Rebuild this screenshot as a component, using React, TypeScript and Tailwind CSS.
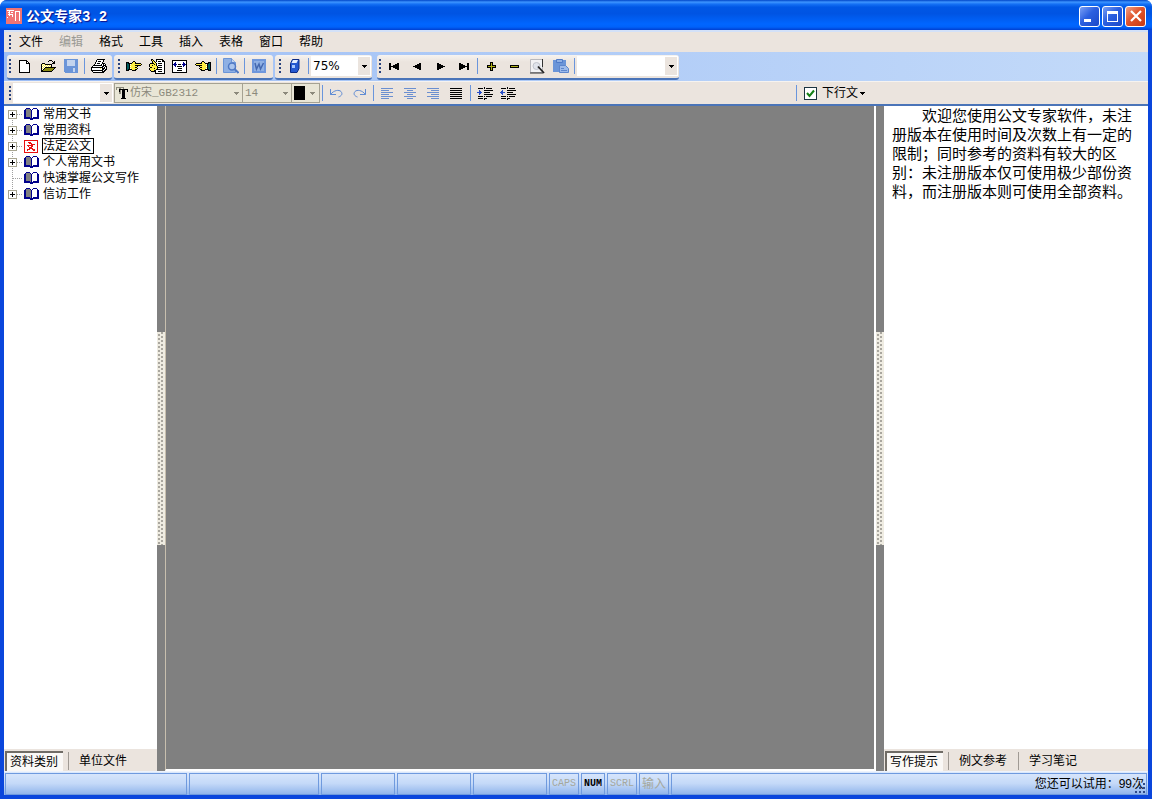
import React from 'react';

const ui = "font-['Liberation_Sans','Noto_Sans_CJK_SC',sans-serif]";

type IconProps = { children: React.ReactNode; size?: number };

function Icon({ children, size = 16 }: IconProps) {
  return (
    <svg width={size} height={size} viewBox={`0 0 ${size} ${size}`} shapeRendering="crispEdges" aria-hidden="true">
      {children}
    </svg>
  );
}

const palette: Record<string, string> = {
  k: '#000000',
  y: '#ffee44',
  w: '#ffffff',
  t: '#005a5a',
  o: '#8a8a12',
  g: '#808080',
  b: '#00008c',
  r: '#e81010',
  l: '#6b95d8',
  m: '#c3d4ee',
  s: '#2a50c8',
};

function Pixels({ rows }: { rows: string[] }) {
  const w = Math.max(...rows.map((r) => r.length));
  return (
    <svg width={w} height={rows.length} viewBox={`0 0 ${w} ${rows.length}`} shapeRendering="crispEdges" aria-hidden="true">
      {rows.flatMap((row, y) =>
        [...row].map((c, x) => (palette[c] ? <rect key={`${x}-${y}`} x={x} y={y} width="1" height="1" fill={palette[c]} /> : null)),
      )}
    </svg>
  );
}

const newPage = [
  'kkkkkkkk   ',
  'kwwwwwwkk  ',
  'kwwwwwwkwk ',
  'kwwwwwwkkkk',
  'kwwwwwwwwwk',
  'kwwwwwwwwwk',
  'kwwwwwwwwwk',
  'kwwwwwwwwwk',
  'kwwwwwwwwwk',
  'kwwwwwwwwwk',
  'kwwwwwwwwwk',
  'kwwwwwwwwwk',
  'kkkkkkkkkkk',
];

const openFolder = [
  '         kkk    ',
  '        k   k k ',
  '             kk ',
  '  kkk       kkk ',
  ' kywykkkkkkk    ',
  ' kwywywywywk    ',
  ' kywywywywyk    ',
  ' kwywkkkkkkkkkkk',
  ' kywkoooooooook ',
  ' kwkoooooooook  ',
  ' kkoooooooook   ',
  ' kkkkkkkkkkk    ',
];

const disk = [
  'llllllllllllll',
  'lllmmmmmmmmlll',
  'lllmmmmmmmmlll',
  'lllmmmmmmmmlll',
  'lllmmmmmmmmlll',
  'lllmmmmmmmmlll',
  'lllmmmmmmmmlll',
  'llllllllllllll',
  'llllllllllllll',
  'lllllllllmmlll',
  'lllllllllmmlll',
  'lllllllllmmlll',
  'lllllllllmmlll',
  ' lllllllllllll',
];

const printer = [
  '      kkkkkkkk  ',
  '     kwwwwwwk   ',
  '     kwkkkwwk   ',
  '    kwwwwwwk    ',
  '    kwkkkwwkkk  ',
  '   kwwwwwwkwkwk ',
  '  kkkkkkkkkwkkk ',
  ' kwwwwwwwwwkkwkk',
  'kkkkkkkkkkkkwkwk',
  'kwwwwwwwwywkkkwk',
  'kwwwwwwwwwwkkwkk',
  'kkkkkkkkkkkkwkk ',
  ' kwwwwwwwwwkkk  ',
  '  kkkkkkkkkkk   ',
];

const handRight = [
  '       kk       ',
  'kkk   kyyk      ',
  'ktkkkkyyykkkkkk ',
  'kttkwyyyyyyyyyyk',
  'kttkyyyyykkkkkk ',
  'kttkwyyyyyyk    ',
  'kttkyyyyykk     ',
  'kttkwyyyyyyk    ',
  'ktkkkkyyykk     ',
  'kkk   kkkk      ',
];
const handLeft = handRight.map((r) => [...r.padEnd(16)].reverse().join(''));

const handWrite = [
  '  kk   kkkkkkk  ',
  '  kyk  kwwwwwkk ',
  '   kyk kwkkkwkkk',
  '   kyykwwwwwwwwk',
  ' kkkkyykwkkkkwwk',
  'kyyyykykwwwwwwwk',
  'kyykyyykwkkkkwwk',
  'kyyyyyyykwwwwwwk',
  ' kkyyyyykkkkkwwk',
  'kyyyykyykwwwwwwk',
  'kyyyyyykkkkkkwwk',
  ' kyyykkwwwwwwwwk',
  '  kkkkkwwkkkkwwk',
  '      kwwwwwwwwk',
  '      kkkkkkkkkk',
];

const pageWidth = [
  'kkkkkkkkkkkkkkk',
  'kwwwwwwwwwwwwwk',
  'kwwbwwwwwwwbwwk',
  'kwbbwwwwwwwbbwk',
  'kbbbbwkkkwbbbbk',
  'kwbbwwwwwwwbbwk',
  'kwwbwkkkkkwbwwk',
  'kwwwwwwwwwwwwwk',
  'kwwwwwkkkkwwwwk',
  'kwwwwwwwwwwwwwk',
  'kwwwwkkkkkwwwwk',
  'kwwwwwwwwwwwwwk',
  'kkkkkkkkkkkkkkk',
];

const openBook = [
  '  bbbb   bbbb  ',
  ' bggggb bwwwwb ',
  'bbgggggbwwwwwbb',
  'bbgggggbwwwwwbb',
  'bbgggggbwwwwwbb',
  'bbgggggbwwwwwbb',
  'bbgggggbwwwwwbb',
  'bbgggggbwwwwwbb',
  'bbgggggbwwwwwbb',
  'bbbbbbgbwbbbbbb',
  'bbbbbbbbbbbbbbb',
  '      bbb      ',
];

const officialDoc = [
  'rrrrrrrrrrrrrr',
  'rwwwwwwwwwwwwr',
  'rwwwrrrwwwwwwr',
  'rwwwwrrrwwwwwr',
  'rwwwwwwrrrrwwr',
  'rwwrrrrrrwwwwr',
  'rwwwrwwrrwwwwr',
  'rwwwwrrrwwwwwr',
  'rwwwwrrrrwwwwr',
  'rwwrrrwwrrrwwr',
  'rwwrwwwwwrrwwr',
  'rwwwwwwwwwwwwr',
  'rrrrrrrrrrrrrr',
];

const indent = [
  '       k        ',
  ' kkkkk k kkkkkk ',
  '                ',
  '  s    kkkkkkkkk',
  '  ss            ',
  'sssss  kkkkkk   ',
  '  ss            ',
  '  s    kkkkkkkkk',
  '                ',
  ' kkkkk k kkkkkk ',
  '                ',
  ' kkkkk kkk      ',
  '       k        ',
];
const outdent = [
  '       k        ',
  ' kkkkk k kkkkkk ',
  '                ',
  '  s    kkkkkkkkk',
  ' ss             ',
  'sssss  kkkkkk   ',
  ' ss             ',
  '  s    kkkkkkkkk',
  '                ',
  ' kkkkk k kkkkkk ',
  '                ',
  ' kkkkk kkk      ',
  '       k        ',
];

function Lines({ color, widths, align }: { color: string; widths: number[]; align: 'l' | 'c' | 'r' }) {
  return (
    <Icon size={13}>
      {widths.map((w, i) => (
        <rect key={i} x={align === 'l' ? 0 : align === 'c' ? Math.floor((12 - w) / 2) : 12 - w} y={i * 2 + 1} width={w} height="1" fill={color} />
      ))}
    </Icon>
  );
}

function Grip() {
  return (
    <div className="w-1.5 shrink-0 pl-0.5">
      <div className="h-3.5 w-0.5 bg-[repeating-linear-gradient(#27417d_0_2px,transparent_2px_4px)]" />
    </div>
  );
}

function Sep() {
  return (
    <div className="flex w-[5px] shrink-0 justify-center">
      <div className="h-4 w-px bg-[#6a95dc]" />
    </div>
  );
}

function Tool({ label, children }: { label: string; children: React.ReactNode }) {
  return (
    <button type="button" aria-label={label} className="flex h-[22px] w-[23px] shrink-0 items-center justify-center">
      {children}
    </button>
  );
}

function Arrow({ color = '#000', className = '' }: { color?: string; className?: string }) {
  return (
    <svg width="5" height="3" viewBox="0 0 5 3" shapeRendering="crispEdges" aria-hidden="true" className={className}>
      <path d="M0 0h5v1h-1v1h-1v1h-1v-1h-1v-1h-1z" fill={color} />
    </svg>
  );
}

function Combo({
  label,
  value,
  box,
  field,
  disabled = false,
}: {
  label: string;
  value: string;
  box: string;
  field: string;
  disabled?: boolean;
}) {
  return (
    <div className={`relative flex shrink-0 items-center ${box}`}>
      <select
        aria-label={label}
        disabled={disabled}
        defaultValue={value}
        className={`h-full w-full appearance-none outline-none disabled:opacity-100 ${field}`}
      >
        <option>{value}</option>
      </select>
      {!disabled && <span className="pointer-events-none absolute inset-y-px right-px w-3 bg-[#ebe4de]" />}
      <Arrow color={disabled ? '#8c8a7c' : '#000'} className="pointer-events-none absolute right-1" />
    </div>
  );
}

function Group({ children, className = '' }: { children: React.ReactNode; className?: string }) {
  return (
    <div
      role="toolbar"
      className={`flex h-[25px] shrink-0 items-center rounded-[3px] border-b-2 border-[#4a74b8] bg-[linear-gradient(#f6f3f0,#ebe4de_30%)] ${className}`}
    >
      {children}
    </div>
  );
}

function TitleBar() {
  return (
    <header className="flex h-[30px] shrink-0 items-center rounded-t-[7px] bg-[linear-gradient(#0046c8_0,#3d95ff_7%,#1470f4_14%,#0057e5_24%,#0054e3_45%,#0066ff_80%,#0062fa_90%,#003fd0_100%)] px-1.5 pt-0.5">
      <svg width="16" height="16" viewBox="0 0 16 16" shapeRendering="crispEdges" aria-hidden="true">
        <rect width="16" height="16" fill="#f07474" />
        <path d="M1 2.500h7M2 4.500h2M5 4.500h2M2 6.500h5M3.500 3v5M6.500 6v3M9.500 3v10M13.500 3v10M9 3.500h5M1 9h1M11 3v1" stroke="#fff" fill="none" />
      </svg>
      <h1 className="ml-1 flex-1 pt-px font-['Liberation_Mono','Noto_Sans_CJK_SC',monospace] text-sm leading-4 font-bold whitespace-nowrap text-white [text-shadow:1px_1px_1px_#0f1089]">
        公文专家3.2
      </h1>
      <div className="flex gap-0.5">
        <button type="button" aria-label="最小化" className="flex size-[21px] items-end rounded-[3px] border border-white bg-[linear-gradient(135deg,#7ba0f5,#2b5fe0_45%,#1b48c8)] pb-1 pl-1">
          <span className="h-[3px] w-[7px] bg-white" />
        </button>
        <button type="button" aria-label="最大化" className="flex size-[21px] items-center justify-center rounded-[3px] border border-white bg-[linear-gradient(135deg,#7ba0f5,#2b5fe0_45%,#1b48c8)]">
          <span className="size-[11px] border border-t-[3px] border-white" />
        </button>
        <button type="button" aria-label="关闭" className="flex size-[21px] items-center justify-center rounded-[3px] border border-white bg-[linear-gradient(135deg,#f0a085,#e0542c_45%,#c63a12)]">
          <svg width="12" height="12" viewBox="0 0 12 12" aria-hidden="true">
            <path d="M1 1l10 10M11 1l-10 10" stroke="#fff" strokeWidth="2.200" />
          </svg>
        </button>
      </div>
    </header>
  );
}

function MenuBar() {
  const items = ['文件', '编辑', '格式', '工具', '插入', '表格', '窗口', '帮助'];
  return (
    <nav className="flex h-[22px] shrink-0 items-center border-t-2 border-[#d3e1f8] bg-[#ebe4de] pl-[3px]">
      <Grip />
      {items.map((t) => (
        <button key={t} type="button" disabled={t === '编辑'} className="w-10 pr-1 text-xs leading-4 disabled:text-[#9a9a94]">
          {t}
        </button>
      ))}
    </nav>
  );
}

function MainToolbar() {
  return (
    <div className="flex h-[29px] shrink-0 items-center bg-[linear-gradient(90deg,#9ebef5,#c3daf9)] pt-px pl-[3px]">
      <Group className="mr-0.5 pr-0.5">
        <Grip />
        <Tool label="新建"><Pixels rows={newPage} /></Tool>
        <Tool label="打开"><Pixels rows={openFolder} /></Tool>
        <Tool label="保存"><Pixels rows={disk} /></Tool>
        <Sep />
        <Tool label="打印"><Pixels rows={printer} /></Tool>
      </Group>
      <Group className="mr-0.5 pr-[3px] pl-0.5">
        <Grip />
        <Tool label="下一步"><Pixels rows={handRight} /></Tool>
        <Tool label="编写"><Pixels rows={handWrite} /></Tool>
        <Tool label="页宽"><Pixels rows={pageWidth} /></Tool>
        <Tool label="上一步"><Pixels rows={handLeft} /></Tool>
        <Sep />
        <Tool label="打印预览">
          <svg width="16" height="16" viewBox="0 0 16 16" aria-hidden="true">
            <path d="M0.500 0.500h8l4 4v10h-12z" fill="#8fb0e4" stroke="#6b95d8" />
            <path d="M8.500 0.500v4h4" fill="#c3d4ee" stroke="#6b95d8" />
            <circle cx="9" cy="8.500" r="3.500" fill="#a9c4ee" stroke="#5079c4" strokeWidth="1.500" />
            <path d="M11.500 11l4 4" stroke="#5079c4" strokeWidth="2" />
          </svg>
        </Tool>
        <Sep />
        <Tool label="导出到 Word">
          <svg width="14" height="14" viewBox="0 0 14 14" aria-hidden="true">
            <path d="M0 0h14v14H0z" fill="#6f97dc" />
            <path d="M2 2h10v10H2z" fill="#8fb0e4" />
            <path d="M3 4l1.500 6 2.500-5 1.500 5 3-6" stroke="#4468b0" strokeWidth="1.500" fill="none" />
          </svg>
        </Tool>
      </Group>
      <Group className="mr-[5px] pr-px pl-0.5">
        <Grip />
        <Tool label="资料册">
          <svg width="10" height="14" viewBox="0 0 10 14" aria-hidden="true">
            <path d="M0.500 4.500l2-4h6.500v9l-2 4h-6.500z" fill="#2458d0" stroke="#0b2a86" />
            <path d="M1.500 4l1.500-3h5l-1.500 3z" fill="#e4eeff" />
            <path d="M2 6h3v3h-3z" fill="#a8c8ff" />
          </svg>
        </Tool>
        <Sep />
        <Combo label="显示比例" value="75%" box="h-5 w-[60px]" field="bg-white pl-0.5 font-['DejaVu_Sans',sans-serif] text-xs" />
      </Group>
      <Group className="pr-px">
        <Grip />
        <Tool label="首条"><Icon size={11}><path d="M0 2h2v7H0zM10 2v7h-2v-1h-2v-1h-2v-1h-2v-1h2v-1h2v-1h2v-1z" fill="#000" /></Icon></Tool>
        <Tool label="上一条"><Icon size={9}><path d="M8 1v7h-2v-1h-2v-1h-2v-1h-2v-1h2v-1h2v-1h2v-1z" fill="#000" /></Icon></Tool>
        <Tool label="下一条"><Icon size={9}><path d="M1 1v7h2v-1h2v-1h2v-1h2v-1h-2v-1h-2v-1h-2v-1z" fill="#000" /></Icon></Tool>
        <Tool label="末条"><Icon size={11}><path d="M9 2h2v7h-2zM1 2v7h2v-1h2v-1h2v-1h2v-1h-2v-1h-2v-1h-2v-1z" fill="#000" /></Icon></Tool>
        <Sep />
        <Tool label="添加"><Icon size={9}><path d="M3 0h3v3h3v3h-3v3h-3v-3h-3v-3h3z" fill="#000" /><path d="M4 1h1v3h3v1h-3v3h-1v-3h-3v-1h3z" fill="#b0b018" /></Icon></Tool>
        <Tool label="删除"><Icon size={9}><path d="M0 3h9v3h-9z" fill="#000" /><path d="M1 4h7v1h-7z" fill="#b0b018" /></Icon></Tool>
        <Tool label="查找">
          <svg width="15" height="15" viewBox="0 0 15 15" aria-hidden="true">
            <path d="M0.500 0.500h12v13h-12z" fill="#f2f2f4" stroke="#b8b8bc" />
            <path d="M0 14h13M12.500 0v8" stroke="#333" />
            <circle cx="6.500" cy="7" r="3.500" fill="#e0e4ec" stroke="#c0c4cc" />
            <path d="M8 7.500l6 6.500" stroke="#222" strokeWidth="1.800" />
          </svg>
        </Tool>
        <Tool label="粘贴">
          <svg width="16" height="16" viewBox="0 0 16 16" aria-hidden="true">
            <path d="M0 2h13v12H0z" fill="#6b95d8" />
            <path d="M3.500 1.500h6v3h-6z" fill="#8fb0e4" stroke="#4f7ac8" />
            <path d="M6.500 7.500h6l3 3v4h-9z" fill="#9cbaea" stroke="#5d86cc" />
            <path d="M8 10.500h3M8 12.500h6" stroke="#5d86cc" />
          </svg>
        </Tool>
        <Sep />
        <Combo label="搜索范围" value="" box="h-5 w-[101px]" field="bg-white text-xs" />
      </Group>
    </div>
  );
}

function FormatToolbar() {
  const off = 'bg-[#e9e6d6] border border-[#a5a292] text-[#8c8a7c]';
  return (
    <div className="flex h-[25px] shrink-0 items-center border-t border-b-2 border-t-[#f6f3f0] border-b-[#4a74b8] bg-[#ebe4de] pl-[3px]">
      <Grip />
      <Combo label="样式" value="" box="mr-px h-5 w-[100px]" field="bg-white text-xs" />
      <div className="relative flex shrink-0 items-center">
        <Combo
          label="字体"
          value="仿宋_GB2312"
          disabled
          box="h-5 w-[129px]"
          field={`${off} pl-[15px] font-['Liberation_Mono','Noto_Sans_CJK_SC',monospace] text-[11px]`}
        />
        <svg width="12" height="12" viewBox="0 0 12 12" shapeRendering="crispEdges" aria-hidden="true" className="pointer-events-none absolute left-0.5">
          <path d="M0 0h8v3h-1v-2h-2v6h-2v-6h-2v2h-1z" fill="#8c8a7c" />
          <path d="M3 2h9v3h-1v-2h-2v8h1v1h-5v-1h1v-8h-2v2h-1z" fill="#000" />
        </svg>
      </div>
      <Combo
        label="字号"
        value="14"
        disabled
        box="h-5 w-[49px]"
        field={`${off} border-l-0 pl-0.5 font-['Liberation_Mono',monospace] text-[11px]`}
      />
      <button type="button" aria-label="字体颜色" className="flex h-5 w-7 shrink-0 items-center justify-between border border-l-0 border-[#a5a292] bg-[#e9e6d6] pr-1 pl-0.5">
        <span className="h-3.5 w-[11px] bg-black" />
        <Arrow color="#8c8a7c" />
      </button>
      <Sep />
      <Tool label="撤销">
        <svg width="13" height="9" viewBox="0 0 13 9" aria-hidden="true">
          <path d="M0.500 0v5.500h5.500M0.500 5.500C4 1 9 0.500 11 2.500c2 2.500 0.500 4.500-2.500 5.500" stroke="#5f8bd4" fill="none" />
        </svg>
      </Tool>
      <Tool label="恢复">
        <svg width="13" height="9" viewBox="0 0 13 9" aria-hidden="true">
          <path d="M12.500 0v5.500h-5.500M12.500 5.500C9 1 4 0.500 2 2.500c-2 2.500-0.500 4.500 2.500 5.500" stroke="#5f8bd4" fill="none" />
        </svg>
      </Tool>
      <Sep />
      <Tool label="左对齐"><Lines align="l" color="#6b8fd0" widths={[12, 8, 12, 8, 12, 8]} /></Tool>
      <Tool label="居中"><Lines align="c" color="#6b8fd0" widths={[12, 6, 12, 6, 12, 6]} /></Tool>
      <Tool label="右对齐"><Lines align="r" color="#6b8fd0" widths={[12, 8, 12, 8, 12, 8]} /></Tool>
      <Tool label="两端对齐"><Lines align="l" color="#000" widths={[12, 12, 12, 12, 12, 12]} /></Tool>
      <Sep />
      <Tool label="增加缩进"><Pixels rows={indent} /></Tool>
      <Tool label="减少缩进"><Pixels rows={outdent} /></Tool>
      <div className="ml-auto flex w-[354px] shrink-0 items-center">
        <Sep />
        <label className="ml-[5px] flex items-center gap-[5px] text-xs leading-4">
          <span className="relative flex">
            <input type="checkbox" defaultChecked className="size-[13px] appearance-none border border-[#1c3440] bg-white" />
            <svg width="9" height="9" viewBox="0 0 9 9" aria-hidden="true" className="pointer-events-none absolute top-0.5 left-0.5">
              <path d="M1 4l2.500 3L8 1.500" stroke="#158015" strokeWidth="2" fill="none" />
            </svg>
          </span>
          下行文
        </label>
        <button type="button" aria-label="行文方向" className="ml-0.5 flex h-4 w-2 items-center">
          <Arrow />
        </button>
      </div>
    </div>
  );
}

const nodes = [
  { name: '常用文书', expandable: true },
  { name: '常用资料', expandable: true },
  { name: '法定公文', expandable: true, selected: true },
  { name: '个人常用文书', expandable: true },
  { name: '快速掌握公文写作', expandable: false },
  { name: '信访工作', expandable: true },
];

function Tree() {
  return (
    <ul role="tree" className="flex-1">
      {nodes.map((n, i) => (
        <li key={n.name} role="treeitem" className="flex h-4 items-center pl-1">
          <svg width="15" height="16" viewBox="0 0 15 16" shapeRendering="crispEdges" aria-hidden="true" className="shrink-0">
            <path
              d={i === 0 ? 'M4.500 8v8' : i === nodes.length - 1 ? 'M4.500 0v8' : 'M4.500 0v16'}
              stroke="#a0a0a0"
              strokeDasharray="1 1"
            />
            <path d="M5 8.500h9" stroke="#a0a0a0" strokeDasharray="1 1" />
            {n.expandable && (
              <>
                <rect x="0.500" y="4.500" width="8" height="8" fill="#fff" stroke="#a8a590" />
                <path d="M2 8.500h5M4.500 6v5" stroke="#000" />
              </>
            )}
          </svg>
          <span className="mr-0.5 ml-px flex w-4 shrink-0 items-center">
            <Pixels rows={n.selected ? officialDoc : openBook} />
          </span>
          <button
            type="button"
            className={
              n.selected
                ? 'h-4 border border-black pr-0.5 text-xs leading-[14px] whitespace-nowrap'
                : 'h-4 border border-transparent pr-0.5 text-xs leading-[14px] whitespace-nowrap'
            }
          >
            {n.name}
          </button>
        </li>
      ))}
    </ul>
  );
}

function Tabs({ items }: { items: string[] }) {
  return (
    <div role="tablist" className="flex h-[22px] shrink-0 items-center bg-[#ebe4de] pt-0.5 pl-px">
      {items.map((t, i) => (
        <button
          key={t}
          type="button"
          role="tab"
          aria-selected={i === 0}
          className={
            i === 0
              ? 'h-5 w-[58px] border-t-2 border-l-2 border-[#706c66] bg-[#faf8f6] pl-[3px] text-left text-xs leading-4 whitespace-nowrap'
              : i === 1
                ? 'ml-[5px] h-[18px] w-[70px] border-l border-[#a09a94] pl-2.5 text-left text-xs leading-4 whitespace-nowrap'
                : 'h-[18px] w-[70px] border-l border-[#a09a94] pl-2.5 text-left text-xs leading-4 whitespace-nowrap'
          }
        >
          {t}
        </button>
      ))}
    </div>
  );
}

function Splitter({ label }: { label: string }) {
  return (
    <div role="separator" aria-label={label} aria-orientation="vertical" className="flex w-2 shrink-0 flex-col justify-center bg-[#808080]">
      <svg className="h-[213px] w-full" aria-hidden="true" shapeRendering="crispEdges">
        <defs>
          <pattern id={`dots-${label}`} width="8" height="4" patternUnits="userSpaceOnUse">
            <rect width="8" height="4" fill="#efece2" />
            <rect x="1" y="2" width="2" height="2" fill="#aaa79f" />
            <rect x="4" y="0" width="2" height="2" fill="#aaa79f" />
          </pattern>
        </defs>
        <rect width="100%" height="100%" fill={`url(#dots-${label})`} />
      </svg>
    </div>
  );
}

function StatusBar() {
  const cell = 'flex h-[22px] shrink-0 items-center justify-center border border-[#6f9ade]';
  return (
    <footer className="flex h-6 shrink-0 items-center gap-0.5 border-t border-[#eef3fc] bg-[linear-gradient(#dbe8fc,#c4d9f8_50%,#8db2ea)] pl-px">
      <div className={`${cell} w-[182px]`} />
      <div className={`${cell} w-[130px]`} />
      <div className={`${cell} w-[74px]`} />
      <div className={`${cell} w-[74px]`} />
      <div className={`${cell} w-[74px]`} />
      <div className={`${cell} w-[30px] font-['Liberation_Mono',monospace] text-[10px] text-[#a5a89c]`}>CAPS</div>
      <div className={`${cell} w-6 font-['Liberation_Mono',monospace] text-[10px] font-bold`}>NUM</div>
      <div className={`${cell} w-[30px] font-['Liberation_Mono',monospace] text-[10px] text-[#a5a89c]`}>SCRL</div>
      <div className={`${cell} w-[30px] text-xs text-[#a5a89c]`}>输入</div>
      <div className="relative mr-px flex h-[22px] flex-1 items-center justify-end border border-[#6f9ade] pr-0.5 text-xs whitespace-nowrap">
        您还可以试用：99次
        <svg width="11" height="11" viewBox="0 0 11 11" shapeRendering="crispEdges" aria-hidden="true" className="absolute right-0 bottom-0">
          <path d="M8 0h2v2h-2zM4 4h2v2h-2zM8 4h2v2h-2zM0 8h2v2h-2zM4 8h2v2h-2zM8 8h2v2h-2z" fill="#2d4a8a" />
        </svg>
      </div>
    </footer>
  );
}

export default function App() {
  return (
    <div className={`flex h-screen flex-col bg-white text-black ${ui}`}>
      <div className="flex min-h-0 flex-1 flex-col rounded-t-[7px] bg-[#0a46dc]">
        <TitleBar />
        <div className="mx-1 mb-1 flex min-h-0 flex-1 flex-col">
          <MenuBar />
          <MainToolbar />
          <FormatToolbar />
          <main className="flex min-h-0 flex-1">
            <aside className="flex w-[153px] shrink-0 flex-col bg-white">
              <Tree />
              <Tabs items={['资料类别', '单位文件']} />
            </aside>
            <Splitter label="left" />
            <section className="flex-1 border-r-2 border-b-2 border-l border-r-white border-b-white border-l-[#c8bfae] bg-[#808080]" />
            <Splitter label="right" />
            <aside className="flex w-[264px] shrink-0 flex-col bg-white">
              <p className="flex-1 pr-2.5 pl-2 indent-[30px] text-[15px] leading-[19px]">
                欢迎您使用公文专家软件，未注册版本在使用时间及次数上有一定的限制；同时参考的资料有较大的区别：未注册版本仅可使用极少部份资料，而注册版本则可使用全部资料。
              </p>
              <Tabs items={['写作提示', '例文参考', '学习笔记']} />
            </aside>
          </main>
          <StatusBar />
        </div>
      </div>
    </div>
  );
}
